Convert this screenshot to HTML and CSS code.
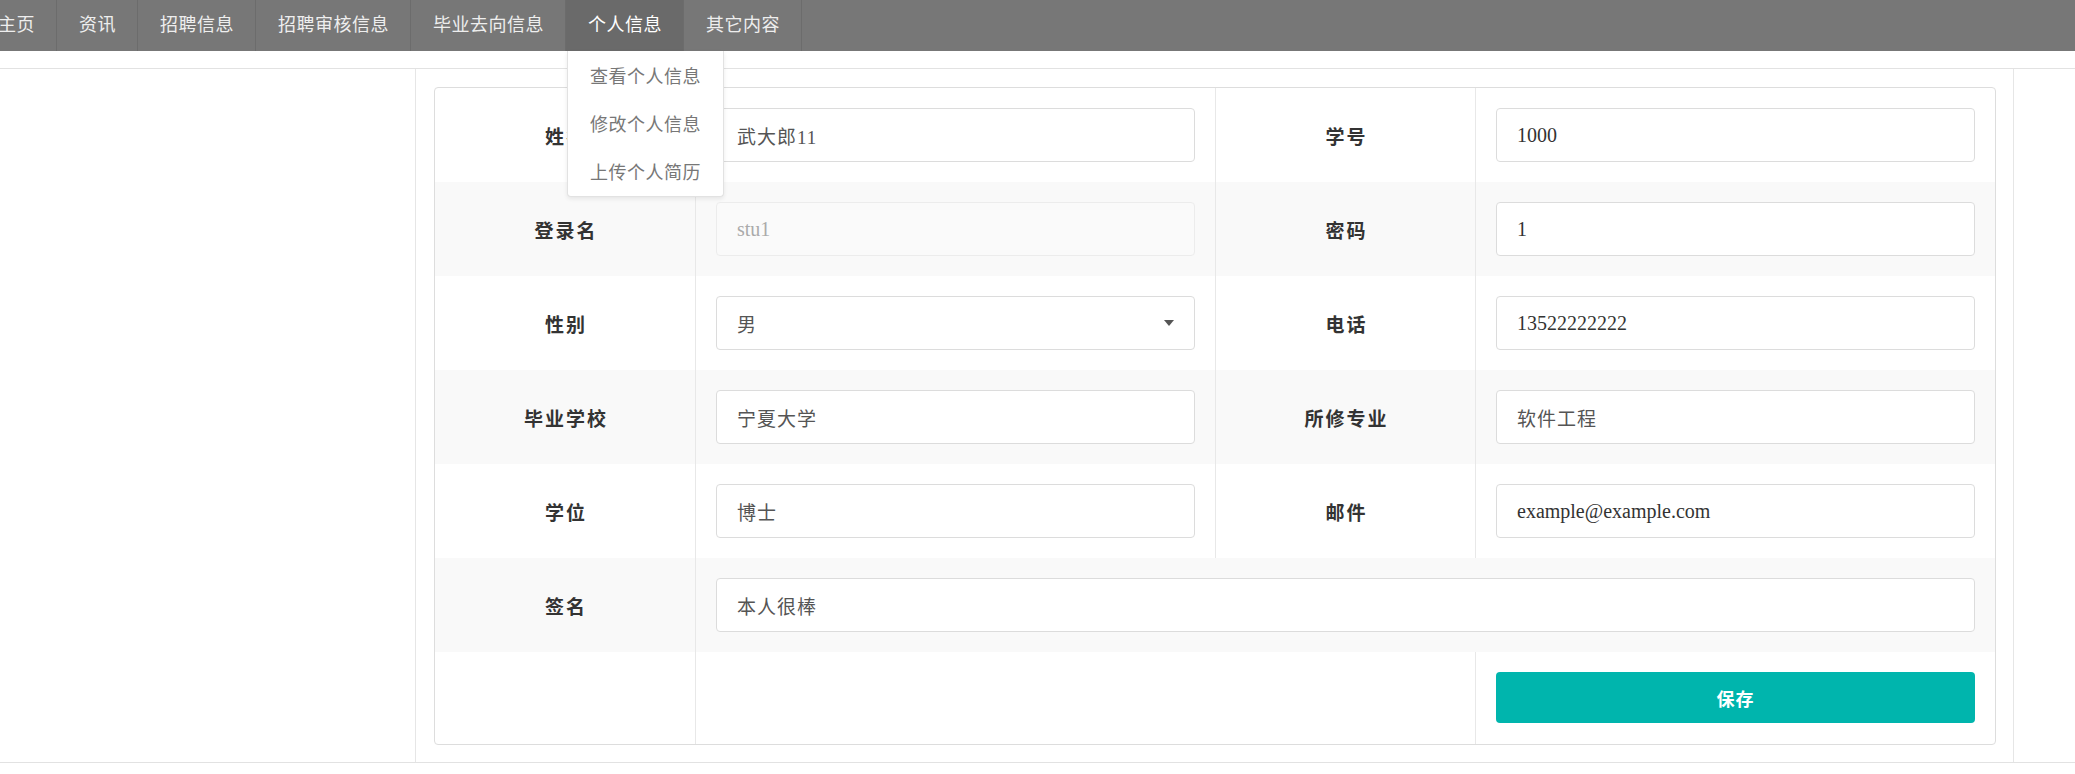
FILE: index.html
```html
<!DOCTYPE html>
<html lang="zh-CN">
<head>
<meta charset="utf-8">
<title>个人信息</title>
<link rel="stylesheet" href="styles.css">
</head>
<body>
<nav class="topnav">
  <ul class="nav-list">
    <li class="nav-item">主页</li>
    <li class="nav-item">资讯</li>
    <li class="nav-item">招聘信息</li>
    <li class="nav-item">招聘审核信息</li>
    <li class="nav-item">毕业去向信息</li>
    <li class="nav-item active">个人信息
      <ul class="dropdown">
        <li class="dropdown-item">查看个人信息</li>
        <li class="dropdown-item">修改个人信息</li>
        <li class="dropdown-item">上传个人简历</li>
      </ul>
    </li>
    <li class="nav-item">其它内容</li>
  </ul>
</nav>
<div class="layout">
  <aside class="side"></aside>
  <main class="main">
    <div class="card">
      <div class="row">
        <div class="label">姓名</div>
        <div class="cell"><input class="field cjk" value="武大郎11"></div>
        <div class="label">学号</div>
        <div class="cell"><input class="field" value="1000"></div>
      </div>
      <div class="row alt">
        <div class="label">登录名</div>
        <div class="cell"><input class="field" value="stu1" disabled></div>
        <div class="label">密码</div>
        <div class="cell"><input class="field" value="1"></div>
      </div>
      <div class="row">
        <div class="label">性别</div>
        <div class="cell"><div class="field select"><span class="cjk">男</span><span class="caret"></span></div></div>
        <div class="label">电话</div>
        <div class="cell"><input class="field" value="13522222222"></div>
      </div>
      <div class="row alt">
        <div class="label">毕业学校</div>
        <div class="cell"><input class="field cjk" value="宁夏大学"></div>
        <div class="label">所修专业</div>
        <div class="cell"><input class="field cjk" value="软件工程"></div>
      </div>
      <div class="row">
        <div class="label">学位</div>
        <div class="cell"><input class="field cjk" value="博士"></div>
        <div class="label">邮件</div>
        <div class="cell"><input class="field" value="example@example.com"></div>
      </div>
      <div class="row alt">
        <div class="label">签名</div>
        <div class="cell wide"><input class="field cjk" value="本人很棒"></div>
      </div>
      <div class="row last">
        <div class="label"></div>
        <div class="cell span2"></div>
        <div class="cell"><button class="btn-save" type="button">保存</button></div>
      </div>
    </div>
  </main>
  <div class="rest"></div>
</div>
</body>
</html>
```
FILE: styles.css
```css
* { box-sizing: border-box; }
html, body { margin: 0; padding: 0; background: #fff; }
body {
  width: 2075px;
  overflow: hidden;
  font-family: "Noto Sans CJK SC", "Liberation Sans", sans-serif;
  color: #333;
}

/* top navigation */
.topnav {
  height: 51px;
  background: #777777;
}
.nav-list {
  list-style: none;
  margin: 0 0 0 -24px;
  padding: 0;
  display: flex;
  height: 51px;
}
.nav-item {
  position: relative;
  height: 51px;
  line-height: 46px;
  padding: 0 21px 0 22px;
  font-size: 18px;
  letter-spacing: 0.5px;
  color: #eeeeee;
  border-right: 1px solid #6c6c6c;
  white-space: nowrap;
}
.nav-item.active {
  background: #6a6a6a;
  color: #ffffff;
}
.dropdown {
  position: absolute;
  top: 51px;
  left: 1px;
  z-index: 10;
  list-style: none;
  margin: 0;
  padding: 0 0 1px;
  width: 157px;
  background: #fff;
  border: 1px solid #e2e2e2;
  border-top: none;
  border-radius: 0 0 4px 4px;
  box-shadow: 0 2px 4px rgba(0, 0, 0, 0.08);
}
.dropdown-item {
  height: 48px;
  line-height: 48px;
  padding-left: 22px;
  font-size: 18px;
  letter-spacing: 0.5px;
  color: #777;
}

/* page layout */
.layout {
  display: flex;
  margin-top: 17px;
  border-top: 1px solid #e2e2e2;
  border-bottom: 1px solid #e2e2e2;
}
.side {
  width: 416px;
  border-right: 1px solid #e6e6e6;
}
.main {
  width: 1598px;
  padding: 18px 18px 17px 18px;
  border-right: 1px solid #e6e6e6;
}
.rest { flex: 1; }

/* form card */
.card {
  width: 1562px;
  border: 1px solid #dddddd;
  border-radius: 4px;
  overflow: hidden;
  background: #fff;
}
.row {
  display: grid;
  grid-template-columns: 260px 520px 260px 520px;
  height: 94px;
}
.row.alt { background: #f9f9f9; }
.row.last { height: 92px; }
.label {
  display: flex;
  align-items: center;
  justify-content: center;
  padding-left: 2px;
  font-size: 19px;
  font-weight: 700;
  letter-spacing: 2px;
  color: #333;
}
.cell {
  padding: 20px;
  border-left: 1px solid #e8e8e8;
}
.cell.wide { grid-column: 2 / span 3; }
.cell.span2 { grid-column: 2 / span 2; }
.row > .label:nth-child(3) { border-left: 1px solid #e8e8e8; }
.row.last .cell { padding: 20px 20px 21px; }

.field {
  display: block;
  width: 100%;
  height: 54px;
  margin: 0;
  padding: 0 20px;
  border: 1px solid #dcdcdc;
  border-radius: 4px;
  background: #fff;
  font-family: "Liberation Serif", "Noto Sans CJK SC", serif;
  font-size: 20px;
  color: #333;
  outline: none;
}
.field.cjk, .cjk {
  font-family: "Liberation Serif", "Noto Sans CJK SC", serif;
  font-size: 19px;
  letter-spacing: 1px;
  color: #555;
}
.field:disabled {
  background: #fafafa;
  border-color: #ececec;
  color: #aaa;
  -webkit-text-fill-color: #aaa;
}
.select {
  display: flex;
  align-items: center;
  justify-content: space-between;
  padding-right: 20px;
}
.caret {
  width: 0;
  height: 0;
  border-left: 5px solid transparent;
  border-right: 5px solid transparent;
  border-top: 6px solid #555;
}
.btn-save {
  display: block;
  width: 100%;
  height: 51px;
  border: none;
  border-radius: 4px;
  background: #00b5ad;
  color: #fff;
  font-family: "Noto Sans CJK SC", sans-serif;
  font-size: 18px;
  font-weight: 700;
  letter-spacing: 1px;
}
```
